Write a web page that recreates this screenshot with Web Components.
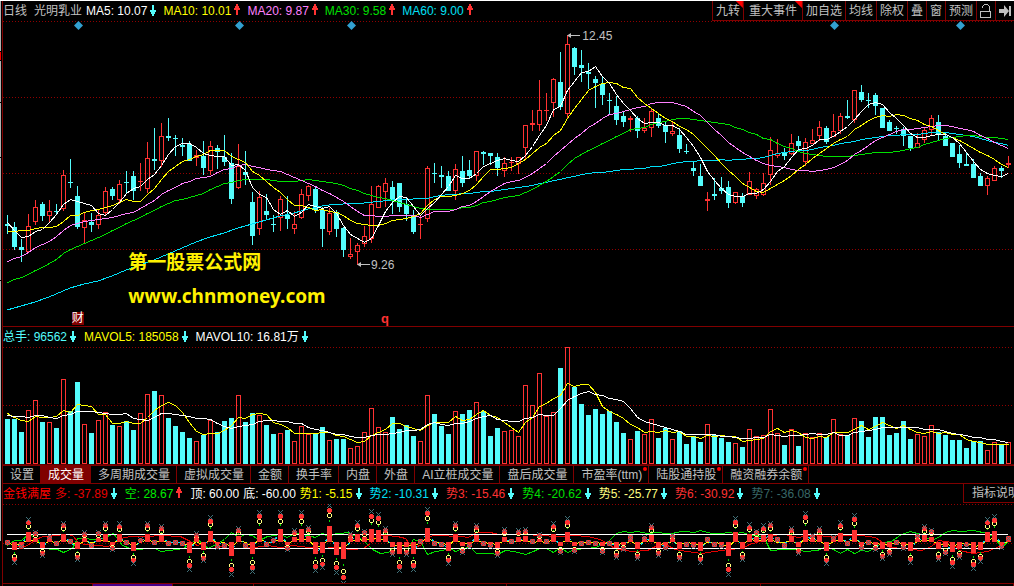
<!DOCTYPE html>
<html lang="zh-CN">
<head>
<meta charset="utf-8">
<title>光明乳业 日线</title>
<style>
  body { margin: 0; background: #000; color: #c0c0c0; font: 12px/20px "Liberation Sans", "Noto Sans CJK SC", sans-serif; }
</style>
</head>
<body>
<stock-board></stock-board>
<script>
const define = (name, html, setup) => customElements.define(name, class extends HTMLElement {
  connectedCallback() {
    if (this.shadowRoot) return;
    const t = document.createElement('template');
    t.innerHTML = html;
    this.attachShadow({ mode: 'open' }).append(t.content.cloneNode(true));
    if (setup) setup(this, this.shadowRoot);
  }
});

/* Prices and volumes are kept on the vertical scale of the charts: type, high, body top, body bottom, low. */
const CANDLES = `c215,224,226,234 c222,227,247,250 c239,247,250,262 r214,226,252,252 r200,207,222,225 c202,204,216,221 r200,211,216,222 c204,211,212,215 r170,175,209,211 c159,182,183,188
c186,196,227,229 r213,220,228,243 c213,222,225,232 r210,215,225,229 r187,191,213,215 c187,189,196,200 r180,184,200,204 c171,182,183,193 c171,176,191,200 r163,181,182,191
r142,158,189,193 c128,159,161,170 r123,136,161,167 c118,136,138,141 c135,138,139,156 c138,145,147,156 c141,144,161,161 r150,155,158,166 c141,156,168,175 r141,146,171,175
c145,148,152,169 c135,157,162,166 c153,163,199,204 r144,166,188,189 c151,172,175,185 c192,202,236,245 r191,197,229,235 c194,211,215,220 c215,224,225,232 r196,199,218,231
c196,215,219,229 r211,224,229,234 r189,194,218,219 r185,186,196,201 c186,189,210,213 c207,210,229,247 r208,213,232,235 c210,212,229,237 c227,228,250,257 r238,254,257,259
r243,245,252,265 r226,236,244,247 r186,204,239,243 r185,186,208,208 r178,183,192,207 c181,187,200,214 c183,183,207,212 c198,204,214,221 c210,215,232,234 r215,224,225,239
r166,168,219,222 c163,173,174,183 c166,175,177,188 c171,176,191,191 r164,169,191,200 c156,171,183,187 c160,170,176,178 r151,151,176,181 c151,152,154,165 c153,153,156,165
c153,157,168,176 r157,163,171,177 r157,162,163,171 r157,157,164,174 r125,125,148,160 r110,123,125,131 r80,110,125,131 r93,110,111,121 r78,79,103,117 c52,82,107,110
r35,44,114,118 c47,48,67,75 c50,65,68,82 c63,72,74,89 c76,79,83,108 c77,84,95,105 c93,100,101,115 c96,106,120,125 c111,116,122,127 r116,118,120,132
c116,118,131,138 r118,128,131,133 r109,111,128,137 c114,118,126,128 c122,125,132,143 r122,131,134,136 c128,135,149,153 c144,151,152,154 c161,168,171,176 c164,176,186,186
r192,199,201,211 c178,194,196,200 c177,188,191,194 c181,187,203,208 r192,192,203,204 c193,196,203,207 r172,181,195,195 r188,189,196,199 r173,183,195,196 r137,150,175,185
r139,153,156,158 c148,153,156,160 r134,143,154,155 c136,141,146,150 r138,142,162,166 r129,140,144,144 r121,127,136,141 c126,128,142,144 r114,131,137,137 r113,116,131,134
c100,116,118,119 r90,90,120,123 c85,92,100,102 c93,100,101,108 c93,95,106,115 c108,108,128,128 c120,122,131,131 c126,128,129,134 c127,129,136,146 c136,136,148,151
r133,143,148,148 r128,130,140,143 r115,118,130,135 c115,122,135,140 c132,136,146,146 c143,143,157,157 c145,154,163,168 c153,164,166,166 c159,164,178,178 c173,176,186,186
r176,178,186,195 r166,168,181,181 c166,168,171,178 r156,163,165,168`.split(/\s+/).map(s => ({ up: s[0] === 'r', v: s.slice(1).split(',').map(Number) }));
const VOLUMES = [419,419,432,410,400,422,422,428,379,411,382,424,433,420,412,425,426,421,430,413,394,391,395,418,426,432,438,441,435,420,432,421,418,395,422,413,415,425,434,433,430,441,426,434,434,427,440,439,
439,448,446,432,408,427,432,417,429,425,436,441,395,414,426,434,411,414,410,402,411,436,428,431,430,436,385,405,373,416,412,368,347,387,404,415,409,414,411,422,433,439,431,434,419,438,428,439,
431,444,436,442,424,435,438,442,443,447,429,436,435,409,433,445,429,446,433,437,433,437,419,434,435,418,421,437,417,417,435,433,421,439,434,436,425,432,435,440,440,448,441,441,450,442,445,442];
const POWER = [0,-59,-13,69,31,-39,19,-3,58,3,-52,29,-9,31,58,-22,56,-1,-62,8,58,0,48,-4,-1,-4,-80,26,-55,75,-14,-9,-95,43,-9,-86,90,-6,8,90,-20,36,90,45,-85,-76,112,-89,
-122,26,59,34,92,83,41,-35,-85,-35,-82,4,100,-3,-6,-64,58,-31,-12,52,-4,-12,-39,38,4,36,40,4,24,2,56,-30,71,-28,-4,0,-4,-30,-2,-44,-21,16,-49,14,52,-39,-19,21,
-51,-7,-11,-60,10,-6,-12,-95,71,-51,53,34,50,58,9,-10,43,-33,87,21,43,-64,15,61,-4,81,-18,-1,-22,-49,-36,-1,-18,-61,22,48,37,-51,-34,-71,-46,-8,-78,-57,69,78,-15,13];

const X = i => 7 + 7 * i;
const line = (pts, color, extra = '') => `<polyline points="${pts.map(p => p.join()).join(' ')}" fill="none" stroke="${color}" ${extra}/>`;
const grid = ys => ys.map(y => `<path d="M3 ${y}.5H1014" stroke="#900000" stroke-dasharray="1 2"/>`).join('');
function average(values, n, start, color) {
  const pts = [...start];
  for (let i = n - 1; i < values.length; i++) {
    let sum = 0;
    for (let k = 0; k < n; k++) sum += values[i - k];
    pts.push([X(i) + .5, Math.round(sum / n) + .5]);
  }
  return line(pts, color);
}
const each = a => a.map((y, i) => [X(i) + .5, y + .5]);
const CHART = `<style>
  :host { display: flex; flex-direction: column; position: relative; }
  svg { display: block; width: 100%; flex: 1 0 auto; }
  #plot { shape-rendering: crispEdges; }
</style>`;

define('move-arrow', `<style>
  :host { display: block; width: 6px; height: 14px; }
  svg { display: block; fill: #54fcfc; }
  :host([up]) svg { transform: scaleY(-1); fill: #ff3232; }
</style><svg width="6" height="12" shape-rendering="crispEdges"><path d="M2 1h2v5h2v2H5v2H4v2H2v-2H1V8H0V6h2z"/></svg>`);

define('legend-item', `<style>
  :host { display: flex; align-items: center; gap: 3px; white-space: nowrap; flex: none; }
</style><slot></slot>`, (el, root) => {
  el.style.color = el.getAttribute('color');
  const dir = el.getAttribute('move');
  if (dir) {
    const a = document.createElement('move-arrow');
    if (dir === 'up') a.setAttribute('up', '');
    root.append(a);
  }
});

define('legend-bar', `<style>
  :host { display: flex; height: 20px; justify-content: space-between; overflow: hidden; }
  .items { display: flex; gap: var(--legend-gap, 8px); min-width: 0; overflow: hidden; }
  ::slotted([slot=end]) { flex: none; }
</style><div class="items"><slot></slot></div><slot name="end"></slot>`);

define('tool-button', `<style>
  :host { display: block; position: relative; }
  button { display: flex; align-items: center; height: 20px; padding: 0 3px; border: solid #800000; border-width: 0 0 1px 1px; background: #000; color: inherit; font: inherit; white-space: nowrap; }
  :host([wide]) button { padding: 0 5px; }
  i { display: none; position: absolute; top: 0; right: 0; width: 7px; height: 7px; background: #f00; clip-path: polygon(0 0, 100% 0, 100% 100%); }
  :host([hot]) i { display: block; }
</style><button type="button"><slot></slot></button><i></i>`, (el, root) => {
  if (el.hasAttribute('label')) root.querySelector('button').setAttribute('aria-label', el.getAttribute('label'));
});

define('tool-strip', `<style>:host { display: flex; }</style>
<tool-button hot>九转</tool-button><tool-button hot wide>重大事件</tool-button><tool-button>加自选</tool-button><tool-button>均线</tool-button><tool-button>除权</tool-button><tool-button>叠</tool-button><tool-button>窗</tool-button><tool-button>预测</tool-button>
<tool-button label="锁定"><svg width="12" height="16" fill="none" stroke="#c0c0c0" shape-rendering="crispEdges"><path d="M.5 8.5h10v6H.5zM2.500 5V3.500L4.500 1.500h3l2 2V8"/></svg></tool-button>
<tool-button label="移到最后"><svg width="12" height="14" fill="#c0c0c0"><path d="M0 5h5V1l5 6-5 6V9H0zM10 2h2v10h-2z"/></svg></tool-button>`);

define('candle-chart', CHART + `<style>
  :host { flex: 1 0 auto; }
  svg { height: 305px; }
  span { position: absolute; line-height: 14px; white-space: nowrap; }
  .high { left: 57.300%; top: 8px; }
  .low { left: 36.400%; top: 237px; }
  .mark { left: 12.400%; top: 224px; color: #fff200; font: bold 19px/34px "Noto Sans", "Noto Sans CJK SC", sans-serif; }
  .news { left: 6.800%; top: 291px; color: #fff; background: #800000; line-height: 13px; }
  .q { left: 37.400%; top: 291px; color: #ff3232; font-size: 13px; font-weight: bold; }
</style><svg viewBox="3 21 1011 305" preserveAspectRatio="none" role="img" aria-label="K线图"><g id="plot"></g><g id="marks"></g></svg>
<span class="high">12.45</span><span class="low">9.26</span>
<span class="mark">第一股票公式网<br>www.chnmoney.com</span><span class="news">财</span><span class="q">q</span>`, (el, root) => {
  let s = grid([21, 97, 173, 249]);
  CANDLES.forEach(({ up, v: [h, t, b, l] }, i) => {
    const x = X(i);
    if (up) {
      s += `<path d="M${x + .5} ${h}V${t}M${x + .5} ${b}V${l}" stroke="#ff3232"/>`;
      s += b - t < 3 ? `<rect x="${x - 2}" y="${t}" width="5" height="${b - t}" fill="#ff3232"/>`
        : `<rect x="${x - 1.5}" y="${t + .5}" width="4" height="${b - t - 1}" fill="none" stroke="#ff3232"/>`;
    } else {
      s += `<path d="M${x + .5} ${h}V${l}" stroke="#54fcfc"/><rect x="${x - 2}" y="${t}" width="5" height="${b - t}" fill="#54fcfc"/>`;
    }
  });
  const close = CANDLES.map(c => c.up ? c.v[1] : c.v[2] - 1);
  s += average(close, 60, [[7,310],[21,306],[35,302],[49,297],[63,291],[70,288],[84,284],[98,281],[112,276],[126,270],[140,265],[154,260],[168,254],[182,248],[196,242],[210,237],[224,233],[238,228],[252,224],[266,220],[280,216],[294,213],[308,209],[322,206],[336,204],[343,204],[364,203],[392,200],[413,199]], '#00e0f8');
  s += average(close, 30, each([282,279,277,274,270,267,263,259,253,249,246,243,240,237,234,230,227,223,220,217,213,210,206,203,200,199,197,195,193]), '#00e000');
  s += average(close, 20, each([261,258,256,252,247,244,241,236,230,225,223,221,220,219,218,217,215,213,212]), '#ff80ff');
  s += average(close, 10, each([231,231,230,230,228,227,227,226,221]), '#ffff00');
  s += average(close, 5, each([222,230,237,236]), '#ffffff');
  root.getElementById('plot').innerHTML = s;
  root.getElementById('marks').innerHTML =
    [78.5, 239.5, 351.5, 834.5, 960.5].map(x => `<path d="M${x} 21l4.500 4.500-4.500 4.500-4.500-4.500z" fill="#32a0d0"/>`).join('') +
    `<path d="M568 35.500h12M358 264.500h12" stroke="#c0c0c0"/><path d="M567 35.500l4-2.500v5zM357 264.500l4-2.500v5z" fill="#c0c0c0"/>`;
});

define('volume-chart', CHART + `<style>svg { height: 118px; }</style><svg viewBox="3 347 1011 118" preserveAspectRatio="none" role="img" aria-label="成交量图"><g id="plot"></g></svg>`, (el, root) => {
  let s = grid([347, 405]);
  VOLUMES.forEach((y, i) => {
    const x = X(i);
    s += CANDLES[i].up ? `<rect x="${x - 1.5}" y="${y + .5}" width="4" height="${463 - y}" fill="none" stroke="#ff3232"/>`
      : `<rect x="${x - 2}" y="${y}" width="5" height="${464 - y}" fill="#54fcfc"/>`;
  });
  s += '<path d="M3 464.500H1014" stroke="#600000"/>';
  s += average(VOLUMES, 5, each([413,417,420,421]), '#ffff00');
  s += average(VOLUMES, 10, each([415,416,416,417,415,415,417,418,415]), '#ffffff');
  root.getElementById('plot').innerHTML = s;
});

define('power-chart', CHART + `<style>svg { height: 79px; }</style><svg viewBox="3 504 1011 79" preserveAspectRatio="none" role="img" aria-label="金钱满屋图"><g id="plot"></g></svg>`, (el, root) => {
  const third = (x0, a) => a.map(([x, y]) => [Math.round(x0 + x / 3) + .5, Math.round(480 + y / 3) + .5]);
  const green = [
    ...third(0, [[22,195],[43,180],[64,180],[85,163],[106,170],[130,200],[150,207],[170,207],[190,216],[215,203],[232,175],[253,173],[280,177],[310,175],[340,160],[365,195],[390,205],[415,208],[440,203],[463,205],[484,214],[505,209],[530,207],[550,203],[570,190],[590,177],[625,203],[650,190],[672,178],[694,156],[715,170],[736,163],[757,166],[778,180],[800,168],[841,163],[862,172],[883,160],[910,163],[946,170],[967,160],[985,168],[1009,160]]),
    ...third(340, [[0,158],[20,156],[40,165],[55,172],[75,185],[95,208],[120,219],[145,215],[157,205],[200,205],[220,176],[241,182],[262,221],[285,214],[310,210],[325,200],[346,212],[365,203],[390,200],[409,219],[450,218],[472,222],[495,209],[520,212],[535,216],[556,221],[580,212],[598,204],[619,203],[640,217],[661,200],[682,217],[703,208],[740,203],[766,200],[800,186],[829,160],[850,153],[871,157],[892,153],[920,160],[955,155],[976,160],[1000,158]]),
    ...third(674, [[0,156],[30,152],[60,155],[79,149],[110,158],[142,160],[163,155],[184,158],[205,155],[230,166],[268,168],[289,209],[330,206],[360,207],[394,213],[430,211],[457,198],[478,208],[499,219],[520,207],[541,219],[562,211],[583,213],[604,200],[625,186],[650,183],[680,162],[709,152],[740,162],[772,180],[793,170],[814,155],[835,149],[860,154],[898,150],[940,158],[961,170],[982,200],[1003,184]])];
  const red = [
    ...third(0, [[22,186],[43,195],[70,200],[90,190],[106,178],[130,168],[160,164],[200,163],[215,166],[235,185],[253,192],[290,196],[325,198],[345,185],[370,170],[400,168],[445,167],[480,166],[540,168],[565,180],[590,196],[610,188],[632,180],[655,195],[680,203],[715,203],[765,200],[800,195],[841,200],[880,195],[925,200],[960,204],[1009,200]]),
    ...third(340, [[0,205],[40,208],[70,205],[90,190],[110,167],[136,164],[170,168],[195,175],[215,200],[241,195],[262,168],[290,165],[360,167],[385,170],[409,157],[450,157],[475,163],[556,163],[600,166],[650,168],[700,165],[740,168],[780,178],[829,208],[880,213],[920,210],[950,195],[976,192],[1000,203]]),
    ...third(674, [[0,208],[40,213],[80,218],[120,214],[163,208],[205,205],[226,193],[247,187],[268,180],[289,165],[331,163],[373,170],[415,163],[457,168],[520,165],[562,166],[604,170],[625,186],[646,200],[688,205],[740,210],[772,197],[793,180],[835,185],[856,210],[898,218],[940,213],[982,195],[1003,180]])];
  const at = (d, k) => Math.round(542 - d * k / 21);
  const level = k => POWER.map((d, i) => [X(i) + .5, at(d, k) + .5]);
  let s = grid([504, 543]) + line(green, '#00e000') + line(red, '#e60000');
  s += '<path d="M7 534.500H1008M7 548.500H1002" stroke="#fff"/>';
  s += line(level(1), '#ffff00') + line(level(2), '#00e0f8', 'stroke-dasharray="2 5"');
  POWER.forEach((d, i) => {
    const x = X(i), y3 = at(d, 3), y5 = at(d, 5), y6 = at(d, 6), y7 = at(d, 7);
    if (Math.abs(d) > 40) s += `<path d="M${x + .5} ${at(d, 4) - 1}v2" stroke="#00e000"/>`;
    if (Math.abs(d) > 16) s += `<path d="M${x - 1} ${y5 - 1.5}h3M${x - 1} ${y5 + 2.5}h3M${x - 1.5} ${y5 - 1}v3M${x + 2.5} ${y5 - 1}v3" stroke="#ffff80" fill="none"/>`;
    s += `<path d="M${x - 1} ${y6 - 2}h3v1h1v3h-1v1h-3v-1h-1v-3h1z" fill="#ff3232"/>`;
    if (Math.abs(y3 - 542) > 1) s += `<rect x="${x - 2}" y="${Math.min(542, y3)}" width="5" height="${Math.abs(y3 - 542)}" fill="#ff3232"/>`;
    s += `<path d="M${x - 2} ${y7 - 2}h1v1h1v1h1v-1h1v-1h1v1h-1v1h-1v1h1v1h1v1h-1v-1h-1v-1h-1v1h-1v1h-1v-1h1v-1h1v-1h-1v-1h-1z" fill="#407078"/>`;
  });
  root.getElementById('plot').innerHTML = s;
});

define('tab-item', `<style>
  :host { display: block; position: relative; flex: none; }
  button { display: block; height: 17px; padding: 0 6px 0 7px; border: 0; border-right: 1px solid #800000; background: #000; color: inherit; font: inherit; line-height: 18px; white-space: nowrap; }
  :host([active]) button { background: #800000; color: #fff; }
  i { display: none; position: absolute; top: 1px; right: 2px; width: 4px; height: 4px; border-radius: 2px; background: #f00; }
  :host([hot]) i { display: block; }
</style><button type="button" role="tab"><slot></slot></button><i></i>`);

define('indicator-tabs', `<style>:host { display: flex; overflow: hidden; border: solid #800000; border-width: 1px 0; }</style>
<tab-item>设置</tab-item><tab-item active>成交量</tab-item><tab-item>多周期成交量</tab-item><tab-item>虚拟成交量</tab-item><tab-item>金额</tab-item><tab-item>换手率</tab-item><tab-item>内盘</tab-item><tab-item>外盘</tab-item><tab-item>AI立桩成交量</tab-item><tab-item>盘后成交量</tab-item><tab-item hot>市盈率(ttm)</tab-item><tab-item hot>陆股通持股</tab-item><tab-item hot>融资融券余额</tab-item>`,
  (el) => el.setAttribute('role', 'tablist'));

define('help-button', `<style>
  :host { display: block; width: 51px; overflow: hidden; }
  button { display: block; width: 58px; height: 19px; padding: 0 0 0 8px; border: solid #800000; border-width: 0 0 1px 1px; background: #000; color: inherit; font: inherit; line-height: 18px; text-align: left; white-space: nowrap; }
</style><button type="button"><slot></slot></button>`);

define('side-rail', `<style>
  :host { display: flex; flex-direction: column; gap: 1px; width: 2px; border-right: 1px solid #800000; }
  div { width: 1px; background: #b0b0b0; }
  .hot { background: #f00; }
</style><div style="height:50px"></div><div class="hot" style="height:8px"></div><div style="height:41px"></div><div style="height:54px"></div><div style="height:122px"></div><div style="height:260px"></div>`);

define('page-strip', `<style>
  :host { display: grid; grid-template-columns: 90px 80px 81px 1fr 1fr 1fr; height: 2px; border-top: 1px solid #800000; overflow: hidden; }
  div { border-right: 1px solid #800000; }
  .on { background: #480088; }
</style><div></div><div class="on"></div><div></div><div></div><div></div><div></div>`);

define('stock-board', `<style>
  :host { display: flex; min-height: 100vh; box-sizing: border-box; border-top: 1px solid #fff; background: #000; overflow: hidden; }
  side-rail { flex: none; }
  main { flex: 1; min-width: 0; display: flex; flex-direction: column; }
  .pair { display: flex; gap: 4px; }
  .price { --legend-gap: 7px; }
  .volume { border-top: 1px solid #800000; }
</style>
<side-rail></side-rail>
<main>
  <legend-bar class="price">
    <legend-item>日线</legend-item>
    <div class="pair"><legend-item>光明乳业</legend-item><legend-item color="#fff" move="down">MA5: 10.07</legend-item></div>
    <legend-item color="#ff0" move="up">MA10: 10.01</legend-item>
    <legend-item color="#ff80ff" move="up">MA20: 9.87</legend-item>
    <legend-item color="#00e000" move="up">MA30: 9.58</legend-item>
    <legend-item color="#00e0f8" move="up">MA60: 9.00</legend-item>
    <tool-strip slot="end"></tool-strip>
  </legend-bar>
  <candle-chart></candle-chart>
  <legend-bar class="volume">
    <legend-item color="#54fcfc" move="down">总手: 96562</legend-item>
    <legend-item color="#ff0" move="down">MAVOL5: 185058</legend-item>
    <legend-item color="#fff" move="down">MAVOL10: 16.81万</legend-item>
  </legend-bar>
  <volume-chart></volume-chart>
  <indicator-tabs></indicator-tabs>
  <legend-bar>
    <div class="pair"><legend-item color="#f00">金钱满屋</legend-item><legend-item color="#e60000" move="down">多: -37.89</legend-item></div>
    <legend-item color="#0e0" move="up">空: 28.67</legend-item>
    <div class="pair"><legend-item color="#fff">顶: 60.00</legend-item><legend-item color="#fff">底: -60.00</legend-item><legend-item color="#ff0" move="down">势1: -5.15</legend-item></div>
    <legend-item color="#00e0f8" move="down">势2: -10.31</legend-item>
    <legend-item color="#ff3232" move="down">势3: -15.46</legend-item>
    <legend-item color="#00e000" move="down">势4: -20.62</legend-item>
    <legend-item color="#ffff80" move="down">势5: -25.77</legend-item>
    <legend-item color="#ff3232" move="down">势6: -30.92</legend-item>
    <legend-item color="#386868" move="down">势7: -36.08</legend-item>
    <help-button slot="end">指标说明</help-button>
  </legend-bar>
  <power-chart></power-chart>
  <page-strip></page-strip>
</main>`);
</script>
</body>
</html>
